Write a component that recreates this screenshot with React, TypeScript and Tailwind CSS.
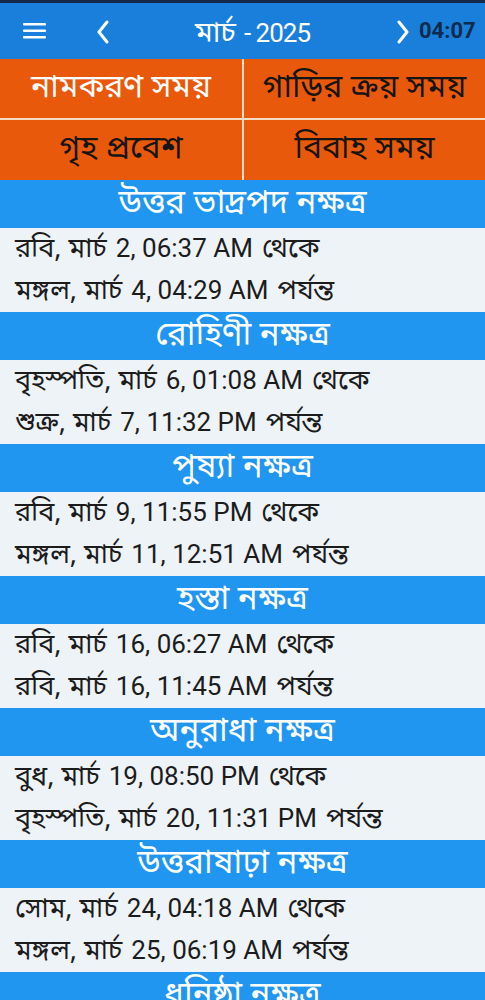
import React from "react";

const sections = [
  {
    title: "উত্তর ভাদ্রপদ নক্ষত্র",
    from: ["রবি, মার্চ", "2, 06:37 AM", "থেকে"],
    to: ["মঙ্গল, মার্চ", "4, 04:29 AM", "পর্যন্ত"],
  },
  {
    title: "রোহিণী নক্ষত্র",
    from: ["বৃহস্পতি, মার্চ", "6, 01:08 AM", "থেকে"],
    to: ["শুক্র, মার্চ", "7, 11:32 PM", "পর্যন্ত"],
  },
  {
    title: "পুষ্যা নক্ষত্র",
    from: ["রবি, মার্চ", "9, 11:55 PM", "থেকে"],
    to: ["মঙ্গল, মার্চ", "11, 12:51 AM", "পর্যন্ত"],
  },
  {
    title: "হস্তা নক্ষত্র",
    from: ["রবি, মার্চ", "16, 06:27 AM", "থেকে"],
    to: ["রবি, মার্চ", "16, 11:45 AM", "পর্যন্ত"],
  },
  {
    title: "অনুরাধা নক্ষত্র",
    from: ["বুধ, মার্চ", "19, 08:50 PM", "থেকে"],
    to: ["বৃহস্পতি, মার্চ", "20, 11:31 PM", "পর্যন্ত"],
  },
  {
    title: "উত্তরাষাঢ়া নক্ষত্র",
    from: ["সোম, মার্চ", "24, 04:18 AM", "থেকে"],
    to: ["মঙ্গল, মার্চ", "25, 06:19 AM", "পর্যন্ত"],
  },
  {
    title: "ধনিষ্ঠা নক্ষত্র",
    from: ["রবি, মার্চ", "30, 10:12 AM", "থেকে"],
    to: ["সোম, মার্চ", "31, 08:04 AM", "পর্যন্ত"],
  },
];

const bn = { fontFamily: '"Noto Sans Bengali", "Lohit Bengali", "Noto Sans", sans-serif' };
const latin = { fontFamily: 'Roboto, "Noto Sans", sans-serif' };

function Line({ parts }: { parts: string[] }) {
  return (
    <div className="h-[42px] flex items-center px-[15px] text-[#1c1c1c] whitespace-nowrap">
      <div className="flex items-baseline leading-none">
        <span className="text-[27px]" style={bn}>{parts[0]}</span>
        <span className="ml-[9px] text-[26px]" style={latin}>{parts[1]}</span>
        <span className="ml-[9px] text-[27px]" style={bn}>{parts[2]}</span>
      </div>
    </div>
  );
}

export default function App() {
  return (
    <div className="w-[485px] h-[1000px] overflow-hidden bg-[#eef3f8]">
      <div className="h-[3px] bg-[#16294a]" />
      <div className="h-[56px] bg-[#1a7fdb] relative">
        <svg className="absolute left-[23px] top-[19px]" width="24" height="18" viewBox="0 0 24 18">
          <rect x="0" y="1" width="23" height="2.4" rx="1" fill="#fff" />
          <rect x="0" y="7.5" width="23" height="2.4" rx="1" fill="#fff" />
          <rect x="0" y="14" width="23" height="2.4" rx="1" fill="#fff" />
        </svg>
        <svg className="absolute left-[95px] top-[17px]" width="16" height="24" viewBox="0 0 16 24">
          <path d="M12 2 L4 12 L12 22" stroke="#fff" strokeWidth="3" fill="none" strokeLinecap="round" strokeLinejoin="round" />
        </svg>
        <div className="absolute left-0 right-0 top-[17px] flex justify-center items-baseline text-white leading-none pl-[20px]">
          <span className="text-[29px]" style={bn}>মার্চ</span>
          <span className="ml-[8px] text-[26px] tracking-[-1px]" style={latin}>- 2025</span>
        </div>
        <svg className="absolute left-[395px] top-[17px]" width="16" height="24" viewBox="0 0 16 24">
          <path d="M4 2 L12 12 L4 22" stroke="#fff" strokeWidth="3" fill="none" strokeLinecap="round" strokeLinejoin="round" />
        </svg>
        <div className="absolute left-[419px] top-[17px] text-[22px] font-bold text-[#0f2b4c] leading-none" style={latin}>04:07</div>
      </div>
      <div className="grid grid-cols-[242px_2px_241px] grid-rows-[59px_2px_60px] bg-[#f6dcc2]" style={bn}>
        <div className="bg-[#e8590b] flex items-center justify-center text-white text-[32px] leading-none">নামকরণ সময়</div>
        <div />
        <div className="bg-[#e8590b] flex items-center justify-center text-[#151515] text-[32px] leading-none">গাড়ির ক্রয় সময়</div>
        <div className="col-span-3" />
        <div className="bg-[#e8590b] flex items-center justify-center text-[#151515] text-[32px] leading-none">গৃহ প্রবেশ</div>
        <div />
        <div className="bg-[#e8590b] flex items-center justify-center text-[#151515] text-[32px] leading-none">বিবাহ সময়</div>
      </div>
      {sections.map((s, i) => (
        <div key={i}>
          <div className="h-[48px] bg-[#2196f0] flex items-center justify-center text-white text-[33px] leading-none" style={bn}>
            {s.title}
          </div>
          <Line parts={s.from} />
          <Line parts={s.to} />
        </div>
      ))}
    </div>
  );
}
